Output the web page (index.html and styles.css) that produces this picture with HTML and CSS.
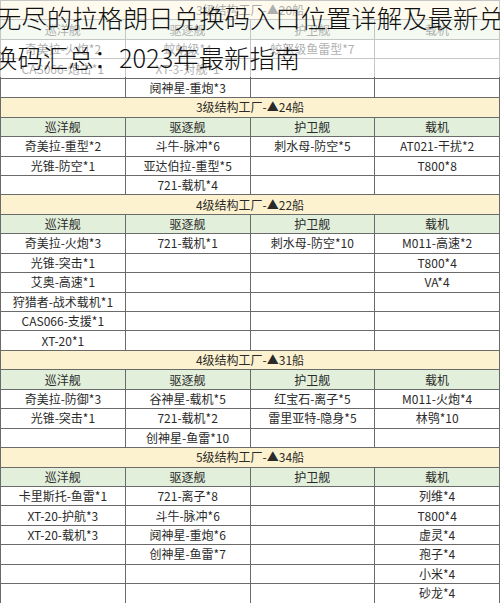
FILE: index.html
```html
<!DOCTYPE html>
<html lang="zh-CN">
<head>
<meta charset="utf-8">
<title>无尽的拉格朗日兑换码</title>
<link rel="stylesheet" href="styles.css">
</head>
<body>
<div class="page">
  <div class="sheet">
    <div class="cell band">3级结构工厂-▲20船</div>
    <div class="cell head">巡洋舰</div><div class="cell head">驱逐舰</div><div class="cell head">护卫舰</div><div class="cell head">载机</div>
    <div class="cell">奇美拉-火炮*2</div><div class="cell">蚊蚋级*4</div><div class="cell">蛟怒级鱼雷型*7</div><div class="cell"></div>
    <div class="cell">CAS066-炮击*1</div><div class="cell">XT-3-对舰*1</div><div class="cell"></div><div class="cell"></div>
    <div class="cell"></div><div class="cell">阋神星-重炮*3</div><div class="cell"></div><div class="cell"></div>

    <div class="cell band">3级结构工厂-▲24船</div>
    <div class="cell head">巡洋舰</div><div class="cell head">驱逐舰</div><div class="cell head">护卫舰</div><div class="cell head">载机</div>
    <div class="cell">奇美拉-重型*2</div><div class="cell">斗牛-脉冲*6</div><div class="cell">刺水母-防空*5</div><div class="cell">AT021-干扰*2</div>
    <div class="cell">光锥-防空*1</div><div class="cell">亚达伯拉-重型*5</div><div class="cell"></div><div class="cell">T800*8</div>
    <div class="cell"></div><div class="cell">721-载机*4</div><div class="cell"></div><div class="cell"></div>

    <div class="cell band">4级结构工厂-▲22船</div>
    <div class="cell head">巡洋舰</div><div class="cell head">驱逐舰</div><div class="cell head">护卫舰</div><div class="cell head">载机</div>
    <div class="cell">奇美拉-火炮*3</div><div class="cell">721-载机*1</div><div class="cell">刺水母-防空*10</div><div class="cell">M011-高速*2</div>
    <div class="cell">光锥-突击*1</div><div class="cell"></div><div class="cell"></div><div class="cell">T800*4</div>
    <div class="cell">艾奥-高速*1</div><div class="cell"></div><div class="cell"></div><div class="cell">VA*4</div>
    <div class="cell">狩猎者-战术载机*1</div><div class="cell"></div><div class="cell"></div><div class="cell"></div>
    <div class="cell">CAS066-支援*1</div><div class="cell"></div><div class="cell"></div><div class="cell"></div>
    <div class="cell">XT-20*1</div><div class="cell"></div><div class="cell"></div><div class="cell"></div>

    <div class="cell band">4级结构工厂-▲31船</div>
    <div class="cell head">巡洋舰</div><div class="cell head">驱逐舰</div><div class="cell head">护卫舰</div><div class="cell head">载机</div>
    <div class="cell">奇美拉-防御*3</div><div class="cell">谷神星-载机*5</div><div class="cell">红宝石-离子*5</div><div class="cell">M011-火炮*4</div>
    <div class="cell">光锥-突击*1</div><div class="cell">721-载机*2</div><div class="cell">雷里亚特-隐身*5</div><div class="cell">林鸮*10</div>
    <div class="cell"></div><div class="cell">创神星-鱼雷*10</div><div class="cell"></div><div class="cell"></div>

    <div class="cell band">5级结构工厂-▲34船</div>
    <div class="cell head">巡洋舰</div><div class="cell head">驱逐舰</div><div class="cell head">护卫舰</div><div class="cell head">载机</div>
    <div class="cell">卡里斯托-鱼雷*1</div><div class="cell">721-离子*8</div><div class="cell"></div><div class="cell">列维*4</div>
    <div class="cell">XT-20-护航*3</div><div class="cell">斗牛-脉冲*6</div><div class="cell"></div><div class="cell">T800*4</div>
    <div class="cell">XT-20-载机*3</div><div class="cell">阋神星-重炮*6</div><div class="cell"></div><div class="cell">虚灵*4</div>
    <div class="cell"></div><div class="cell">创神星-鱼雷*7</div><div class="cell"></div><div class="cell">孢子*4</div>
    <div class="cell"></div><div class="cell"></div><div class="cell"></div><div class="cell">小米*4</div>
    <div class="cell"></div><div class="cell"></div><div class="cell"></div><div class="cell">砂龙*4</div>
  </div>
  <div class="hero">
    <h1 class="title">无尽的拉格朗日兑换码入口位置详解及最新兑换码汇总：2023年最新指南</h1>
  </div>
</div>
</body>
</html>
```

FILE: styles.css
```css
html, body {
  margin: 0;
  padding: 0;
  background: #ffffff;
  overflow: hidden;
}

.page {
  position: relative;
  width: 500px;
  height: 603px;
  overflow: hidden;
  font-family: "Noto Sans CJK SC", "Liberation Sans", sans-serif;
}

.sheet {
  display: grid;
  grid-template-columns: repeat(4, 1fr);
  grid-auto-rows: 18.45px;
  gap: 1px;
  padding: 1px;
  background: #6a6a6a;
}

.cell {
  background: #ffffff;
  display: flex;
  align-items: center;
  justify-content: center;
  font-size: 12px;
  line-height: 1;
  color: #2a2a2a;
  white-space: nowrap;
}

.band {
  grid-column: 1 / -1;
  background: #fdf2cf;
}

.head {
  background: #e2efda;
}

.hero {
  position: absolute;
  top: 0;
  left: 0;
  width: 500px;
  height: 77px;
  background: rgba(255, 255, 255, 0.62);
}

.title {
  margin: -3px 0 0 -8px;
  width: 522px;
  text-indent: 4px;
  font-size: 25.4px;
  line-height: 40px;
  font-weight: 300;
  color: #111111;
  font-family: "Noto Sans CJK SC", "Liberation Sans", sans-serif;
}
```
